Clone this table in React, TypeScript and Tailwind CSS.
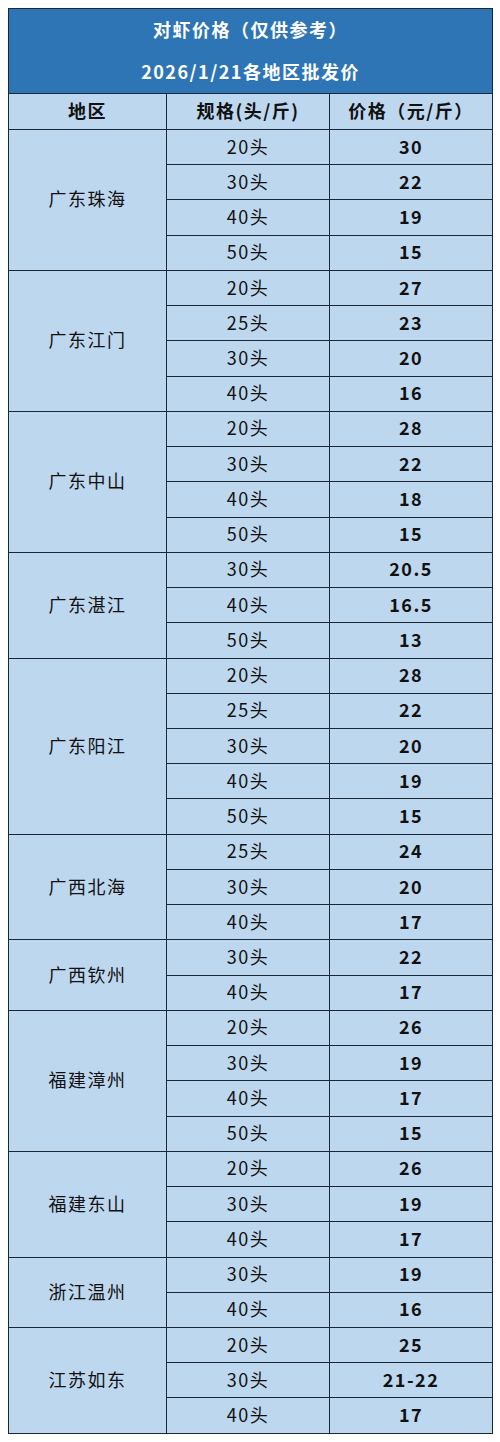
const FONT = '"Noto Sans CJK SC", "Noto Sans", sans-serif';

type Region = { name: string; rows: Array<[string, string]> };

const regions: Region[] = [
  { name: "广东珠海", rows: [["20头", "30"], ["30头", "22"], ["40头", "19"], ["50头", "15"]] },
  { name: "广东江门", rows: [["20头", "27"], ["25头", "23"], ["30头", "20"], ["40头", "16"]] },
  { name: "广东中山", rows: [["20头", "28"], ["30头", "22"], ["40头", "18"], ["50头", "15"]] },
  { name: "广东湛江", rows: [["30头", "20.5"], ["40头", "16.5"], ["50头", "13"]] },
  {
    name: "广东阳江",
    rows: [["20头", "28"], ["25头", "22"], ["30头", "20"], ["40头", "19"], ["50头", "15"]]
  },
  { name: "广西北海", rows: [["25头", "24"], ["30头", "20"], ["40头", "17"]] },
  { name: "广西钦州", rows: [["30头", "22"], ["40头", "17"]] },
  { name: "福建漳州", rows: [["20头", "26"], ["30头", "19"], ["40头", "17"], ["50头", "15"]] },
  { name: "福建东山", rows: [["20头", "26"], ["30头", "19"], ["40头", "17"]] },
  { name: "浙江温州", rows: [["30头", "19"], ["40头", "16"]] },
  { name: "江苏如东", rows: [["20头", "25"], ["30头", "21-22"], ["40头", "17"]] }
];

const cell = "border-[1.5px] border-[#1b2838] text-center align-middle p-0 pb-[2px]";

export default function App() {
  return (
    <div className="min-h-[1442px] w-[500px] bg-white pt-2" style={{ fontFamily: FONT }}>
      <table className="mx-2 w-[484px] table-fixed border-collapse text-[18px] tracking-[1.5px] text-[#111]">
        <colgroup>
          <col className="w-[158px]" />
          <col className="w-[163px]" />
          <col className="w-[163px]" />
        </colgroup>
        <thead>
          <tr className="h-[85px]">
            <th colSpan={3} className={`${cell} bg-[#2e75b6] font-bold text-white`}>
              <div className="flex flex-col items-center gap-[14px] text-[18px] leading-[28px]">
                <span>对虾价格（仅供参考）</span>
                <span>2026/1/21各地区批发价</span>
              </div>
            </th>
          </tr>
          <tr className="h-[36px] bg-[#bdd7ee]">
            <th className={`${cell} font-bold`}>地区</th>
            <th className={`${cell} font-bold`}>规格(头/斤)</th>
            <th className={`${cell} font-bold`}>价格（元/斤）</th>
          </tr>
        </thead>
        <tbody className="bg-[#bdd7ee]">
          {regions.map((r) =>
            r.rows.map(([spec, price], i) => (
              <tr key={r.name + spec} className="h-[35.24px]">
                {i === 0 && (
                  <td rowSpan={r.rows.length} className={cell}>
                    {r.name}
                  </td>
                )}
                <td className={cell}>{spec}</td>
                <td className={`${cell} font-bold`}>{price}</td>
              </tr>
            ))
          )}
        </tbody>
      </table>
    </div>
  );
}
